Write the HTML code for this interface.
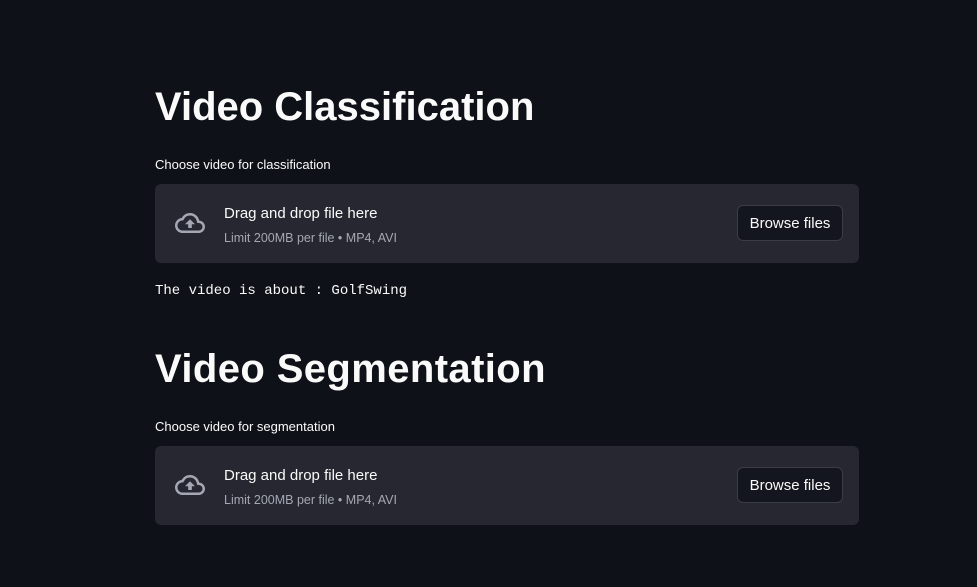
<!DOCTYPE html>
<html><head><style>
body{margin:0;background:#0e1117;width:977px;height:587px;overflow:hidden;font-family:"Liberation Sans",sans-serif;color:#fafafa;position:relative}
.a{position:absolute}
h1{position:absolute;left:155px;margin:0;font-size:40px;font-weight:700;letter-spacing:0;line-height:1}
.lbl{position:absolute;left:155px;font-size:13px;color:#fafafa;top:0}
.box{position:absolute;left:155px;width:704px;height:79px;background:#262730;border-radius:6px}
.box .t1{position:absolute;left:69px;top:21px;font-size:15px}
.box .t2{position:absolute;left:69px;top:47px;font-size:12.5px;color:#a3a8b4}
.btn{position:absolute;left:582px;top:21px;width:106px;height:36px;box-sizing:border-box;border:1px solid #3b3d45;border-radius:6px;background:#13161e;font-size:15px;text-align:center;line-height:35px}
.ic{position:absolute;left:16px;top:24px}
</style></head><body>
<h1 style="top:87px;letter-spacing:0px">Video Classification</h1>
<div class="lbl" style="top:157px">Choose video for classification</div>
<div class="box" style="top:184px">
<svg class="ic" width="38" height="30" viewBox="0 0 24 24"><path fill="#a3a8b4" d="M19.35 10.04A7.49 7.49 0 0 0 12 4C9.11 4 6.6 5.64 5.35 8.04A5.994 5.994 0 0 0 0 14c0 3.31 2.69 6 6 6h13c2.76 0 5-2.24 5-5 0-2.64-2.05-4.78-4.65-4.96zM19 18H6c-2.21 0-4-1.79-4-4 0-2.05 1.53-3.76 3.56-3.97l1.07-.11.5-.95A5.47 5.47 0 0 1 12 6c2.62 0 4.88 1.86 5.39 4.43l.3 1.5 1.53.11A2.98 2.98 0 0 1 22 15c0 1.65-1.35 3-3 3zM8 13h2.55v3h2.9v-3H16l-4-4z"/></svg>
<div class="t1">Drag and drop file here</div>
<div class="t2">Limit 200MB per file • MP4, AVI</div>
<div class="btn">Browse files</div>
</div>
<div class="a" style="left:155px;top:283px;font-family:'Liberation Mono',monospace;font-size:14px">The video is about : GolfSwing</div>
<h1 style="top:349px;letter-spacing:0.4px">Video Segmentation</h1>
<div class="lbl" style="top:419px">Choose video for segmentation</div>
<div class="box" style="top:446px">
<svg class="ic" width="38" height="30" viewBox="0 0 24 24"><path fill="#a3a8b4" d="M19.35 10.04A7.49 7.49 0 0 0 12 4C9.11 4 6.6 5.64 5.35 8.04A5.994 5.994 0 0 0 0 14c0 3.31 2.69 6 6 6h13c2.76 0 5-2.24 5-5 0-2.64-2.05-4.78-4.65-4.96zM19 18H6c-2.21 0-4-1.79-4-4 0-2.05 1.53-3.76 3.56-3.97l1.07-.11.5-.95A5.47 5.470 0 0 1 12 6c2.62 0 4.88 1.86 5.39 4.43l.3 1.5 1.53.11A2.98 2.98 0 0 1 22 15c0 1.65-1.35 3-3 3zM8 13h2.55v3h2.9v-3H16l-4-4z"/></svg>
<div class="t1">Drag and drop file here</div>
<div class="t2">Limit 200MB per file • MP4, AVI</div>
<div class="btn">Browse files</div>
</div>
</body></html>
